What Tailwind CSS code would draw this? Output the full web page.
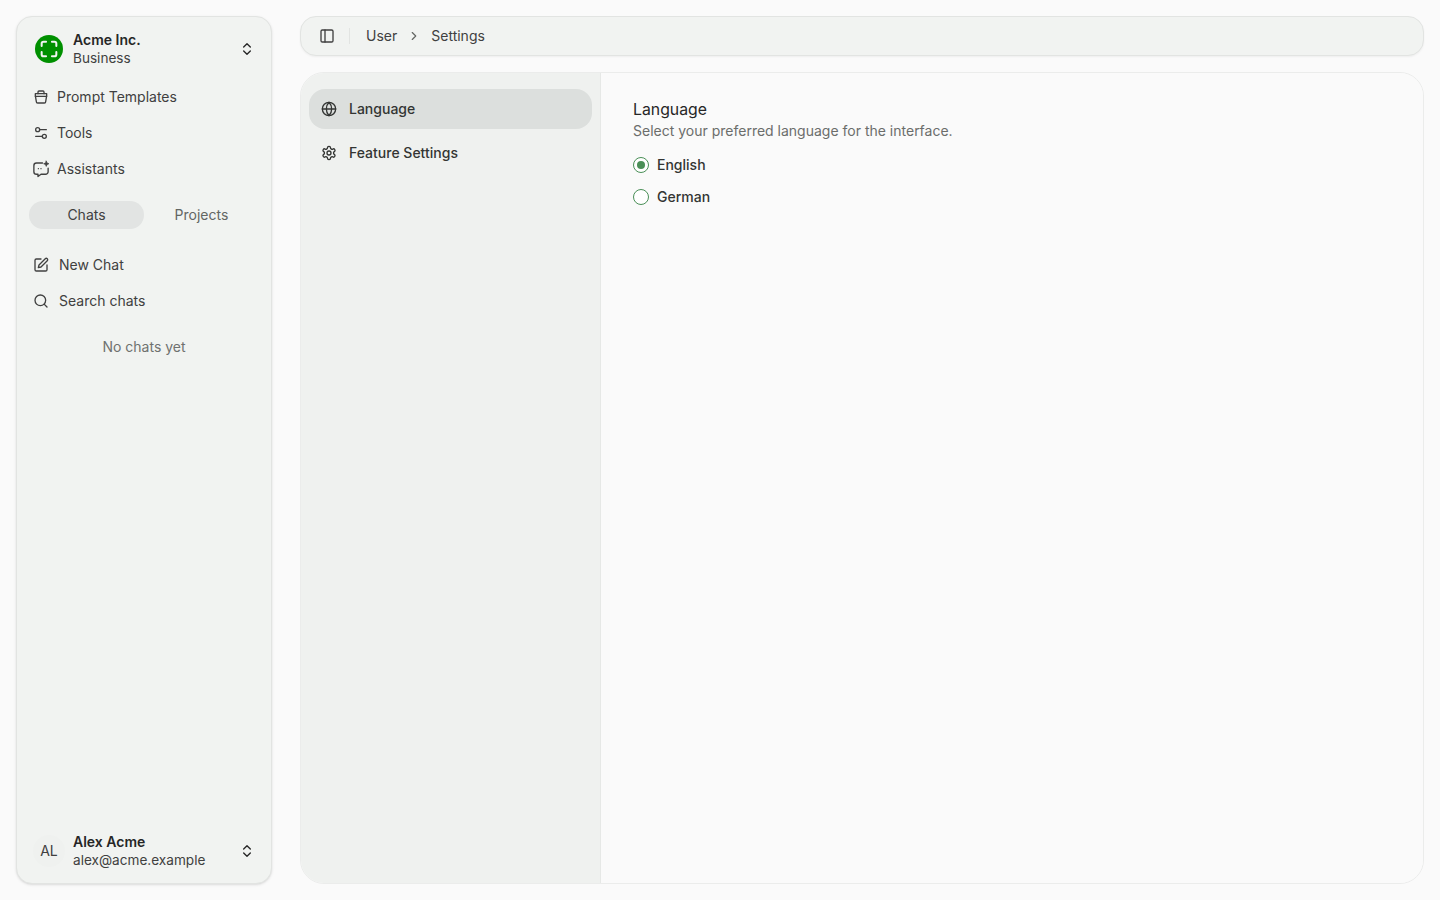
<!DOCTYPE html>
<html lang="en">
<head>
  <meta charset="UTF-8" />
  <title>Settings</title>
  <script src="https://cdn.jsdelivr.net/npm/@tailwindcss/browser@4"></script>
</head>
<body class="bg-[#fafafa] h-screen overflow-hidden font-[Inter,sans-serif] text-sm text-[#262626] antialiased">
  <div class="flex h-full gap-7 p-4">

    <!-- Sidebar -->
    <aside class="flex w-64 shrink-0 flex-col rounded-2xl border border-[#e2e4e2] bg-[#f1f3f1] shadow-sm">
      <div class="flex h-[62px] items-center gap-2.5 pl-[18px] pr-4 pt-[2px]">
        <div class="flex size-[28px] items-center justify-center rounded-full bg-[#009000]">
          <svg viewBox="0 0 24 24" class="size-[22px]" fill="none" stroke="#f1f3f1" stroke-width="2.2" stroke-linecap="round" stroke-linejoin="round"><path d="M8.8 4H6a2 2 0 0 0-2 2v2.8M15.2 4H18a2 2 0 0 1 2 2v2.8M8.8 20H6a2 2 0 0 1-2-2v-2.8M15.2 20H18a2 2 0 0 0 2-2v-2.8"/></svg>
        </div>
        <div class="min-w-0 flex-1 leading-[18px]">
          <div class="font-semibold">Acme Inc.</div>
          <div class="text-[13.6px] text-[#404040]">Business</div>
        </div>
        <svg viewBox="0 0 24 24" class="size-4" fill="none" stroke="currentColor" stroke-width="2" stroke-linecap="round" stroke-linejoin="round"><path d="m7 15 5 5 5-5M7 9l5-5 5 5"/></svg>
      </div>

      <nav class="flex flex-col px-4 text-[#404040]">
        <a class="flex h-9 items-center gap-2">
          <svg viewBox="0 0 24 24" class="size-4" fill="none" stroke="currentColor" stroke-width="2" stroke-linecap="round" stroke-linejoin="round"><path d="M7.5 7V4.5A1.5 1.5 0 0 1 9 3h6a1.5 1.5 0 0 1 1.5 1.5V7"/><path d="M3.5 7h17v3l-1.5 9a2 2 0 0 1-2 2H7a2 2 0 0 1-2-2L3.5 10z"/><path d="M3.5 11h17"/></svg>
          Prompt Templates
        </a>
        <a class="flex h-9 items-center gap-2">
          <svg viewBox="0 0 24 24" class="size-4" fill="none" stroke="currentColor" stroke-width="2" stroke-linecap="round" stroke-linejoin="round"><circle cx="7" cy="7" r="3"/><circle cx="17" cy="17" r="3"/><path d="M10 7h10M4 17h10"/></svg>
          Tools
        </a>
        <a class="flex h-9 items-center gap-2">
          <svg viewBox="0 0 24 24" class="-mx-[1px] size-[18px]" fill="none" stroke="currentColor" stroke-width="1.8" stroke-linecap="round" stroke-linejoin="round"><path d="M14 4H6a3.5 3.5 0 0 0-3.5 3.5v8A3.5 3.5 0 0 0 6 19h2v3l4-3h6a3.5 3.5 0 0 0 3.5-3.5V11"/><path d="M19 1.5 20 4l2.5 1-2.5 1-1 2.5L18 6l-2.5-1L18 4Z" fill="currentColor" stroke-width="1"/><path d="M8.5 11.5h.01M12 11.5h.01"/></svg>
          Assistants
        </a>
      </nav>

      <div class="mt-[14px] grid grid-cols-2 px-3">
        <div class="flex h-7 items-center justify-center rounded-full bg-[#e2e4e3] text-[#404040]">Chats</div>
        <div class="flex h-7 items-center justify-center text-[#636663]">Projects</div>
      </div>

      <div class="mt-[18px] flex flex-col px-4 text-[#404040]">
        <a class="flex h-9 items-center gap-2.5">
          <svg viewBox="0 0 24 24" class="size-4" fill="none" stroke="currentColor" stroke-width="2" stroke-linecap="round" stroke-linejoin="round"><path d="M12 3H5a2 2 0 0 0-2 2v14a2 2 0 0 0 2 2h14a2 2 0 0 0 2-2v-7"/><path d="M18.4 2.6a2.1 2.1 0 1 1 3 3L12 15l-4 1 1-4Z"/></svg>
          New Chat
        </a>
        <a class="flex h-9 items-center gap-2.5">
          <svg viewBox="0 0 24 24" class="size-4" fill="none" stroke="currentColor" stroke-width="2" stroke-linecap="round" stroke-linejoin="round"><circle cx="11" cy="11" r="8"/><path d="m21 21-4.3-4.3"/></svg>
          Search chats
        </a>
      </div>

      <div class="mt-[18px] text-center leading-5 text-[#6f716f]">No chats yet</div>

      <div class="mt-auto flex h-[64px] items-center gap-2.5 pl-[18px] pr-4">
        <div class="flex size-8 -ml-0.5 -mr-0.5 items-center justify-center rounded-full bg-[#eff1ef] text-[#404040]">AL</div>
        <div class="min-w-0 flex-1 leading-[18px]">
          <div class="font-semibold">Alex Acme</div>
          <div class="text-[13.6px] text-[#404040]">alex@acme.example</div>
        </div>
        <svg viewBox="0 0 24 24" class="size-4" fill="none" stroke="currentColor" stroke-width="2" stroke-linecap="round" stroke-linejoin="round"><path d="m7 15 5 5 5-5M7 9l5-5 5 5"/></svg>
      </div>
    </aside>

    <!-- Main -->
    <main class="flex min-w-0 flex-1 flex-col gap-4">
      <header class="flex h-10 shrink-0 items-center rounded-2xl border border-[#e2e4e2] bg-[#f1f3f1] px-[18px] shadow-xs">
        <svg viewBox="0 0 24 24" class="size-4 text-[#404040]" fill="none" stroke="currentColor" stroke-width="2" stroke-linecap="round" stroke-linejoin="round"><rect x="3" y="3" width="18" height="18" rx="2"/><path d="M9 3v18"/></svg>
        <div class="ml-[14px] h-4 w-px bg-[#e2e4e2]"></div>
        <span class="ml-4 text-[#404040]">User</span>
        <svg viewBox="0 0 24 24" class="mx-2.5 size-3.5 text-[#636663]" fill="none" stroke="currentColor" stroke-width="2" stroke-linecap="round" stroke-linejoin="round"><path d="m9 18 6-6-6-6"/></svg>
        <span class="text-[#404040]">Settings</span>
      </header>

      <section class="flex min-h-0 flex-1 overflow-hidden rounded-3xl border border-[#ebeceb]">
        <div class="flex w-[300px] shrink-0 flex-col gap-1 border-r border-[#e6e8e6] bg-[#eff1ef] px-2 pt-4 text-[#333533]">
          <a class="flex h-10 items-center gap-3 rounded-2xl bg-[#dcdfdd] px-3 font-medium">
            <svg viewBox="0 0 24 24" class="size-4" fill="none" stroke="currentColor" stroke-width="2" stroke-linecap="round" stroke-linejoin="round"><circle cx="12" cy="12" r="10"/><path d="M12 2a14.5 14.5 0 0 0 0 20 14.5 14.5 0 0 0 0-20M2 12h20"/></svg>
            Language
          </a>
          <a class="flex h-10 items-center gap-3 rounded-2xl px-3 font-medium">
            <svg viewBox="0 0 24 24" class="size-4" fill="none" stroke="currentColor" stroke-width="2" stroke-linecap="round" stroke-linejoin="round"><path d="M12.22 2h-.44a2 2 0 0 0-2 2v.18a2 2 0 0 1-1 1.73l-.43.25a2 2 0 0 1-2 0l-.15-.08a2 2 0 0 0-2.73.73l-.22.38a2 2 0 0 0 .73 2.73l.15.1a2 2 0 0 1 1 1.72v.51a2 2 0 0 1-1 1.74l-.15.09a2 2 0 0 0-.73 2.73l.22.38a2 2 0 0 0 2.73.73l.15-.08a2 2 0 0 1 2 0l.43.25a2 2 0 0 1 1 1.73V20a2 2 0 0 0 2 2h.44a2 2 0 0 0 2-2v-.18a2 2 0 0 1 1-1.73l.43-.25a2 2 0 0 1 2 0l.15.08a2 2 0 0 0 2.73-.73l.22-.39a2 2 0 0 0-.73-2.73l-.15-.08a2 2 0 0 1-1-1.74v-.5a2 2 0 0 1 1-1.74l.15-.09a2 2 0 0 0 .73-2.73l-.22-.38a2 2 0 0 0-2.73-.73l-.15.08a2 2 0 0 1-2 0l-.43-.25a2 2 0 0 1-1-1.73V4a2 2 0 0 0-2-2z"/><circle cx="12" cy="12" r="3"/></svg>
            Feature Settings
          </a>
        </div>

        <div class="min-w-0 flex-1 bg-[#fafafa] px-8 pt-[27px]">
          <h2 class="text-[15.8px] leading-5">Language</h2>
          <p class="mt-[1px] leading-5 text-[#6b6d6b]">Select your preferred language for the interface.</p>
          <div class="mt-[15px] flex flex-col gap-[14px] font-medium text-[#333533]">
            <label class="flex h-[18px] items-center gap-2">
              <span class="flex size-4 items-center justify-center rounded-full border border-[#4a8f57] bg-white">
                <span class="size-2 rounded-full bg-[#4a8f57]"></span>
              </span>
              English
            </label>
            <label class="flex h-[18px] items-center gap-2">
              <span class="size-4 rounded-full border border-[#4a8f57] bg-white"></span>
              German
            </label>
          </div>
        </div>
      </section>
    </main>
  </div>
</body>
</html>
